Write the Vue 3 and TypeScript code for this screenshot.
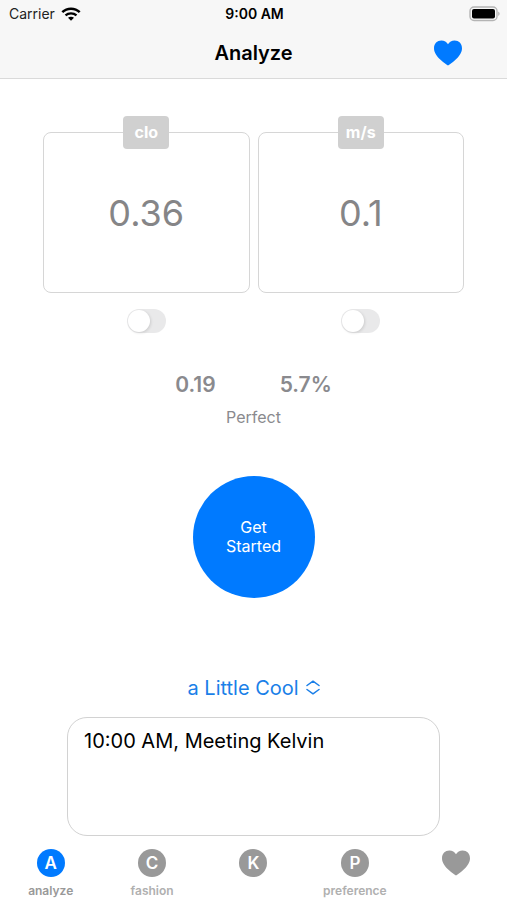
<script setup lang="ts">
import { ref } from 'vue'

interface Reading {
  unit: string
  value: string
  enabled: boolean
}

interface Tab {
  id: string
  letter?: string
  label?: string
  name: string
}

const readings = ref<Reading[]>([
  { unit: 'clo', value: '0.36', enabled: false },
  { unit: 'm/s', value: '0.1', enabled: false },
])

const tabs: Tab[] = [
  { id: 'analyze', letter: 'A', label: 'analyze', name: 'Analyze' },
  { id: 'fashion', letter: 'C', label: 'fashion', name: 'Fashion' },
  { id: 'k', letter: 'K', name: 'K' },
  { id: 'preference', letter: 'P', label: 'preference', name: 'Preference' },
  { id: 'favorites', name: 'Favorites' },
]

const activeTab = ref('analyze')
const sensation = ref('a Little Cool')
const note = ref('10:00 AM, Meeting Kelvin')
const heartPath =
  'M14 25.5C12.8 24.8 9.8 22.8 6.8 20C3.1 16.6 0 12.8 0 8.2C0 3.4 3.2 0.4 7.4 0.4C10.3 0.4 12.7 1.8 14 4.2C15.3 1.8 17.7 0.4 20.6 0.4C24.8 0.4 28 3.4 28 8.2C28 12.8 24.9 16.6 21.2 20C18.2 22.8 15.2 24.8 14 25.5Z'
</script>

<template>
  <div class="app">
    <header class="header">
      <div class="status">
        <div class="carrier">
          <span>Carrier</span>
          <svg width="20" height="14" viewBox="0 0 20 14" fill="none" aria-hidden="true">
            <path d="M1.3 5.2C6.1 0.6 13.9 0.6 18.7 5.2" stroke="#000" stroke-width="2.5" />
            <path d="M4.5 8.4C7.5 5.7 12.5 5.7 15.5 8.4" stroke="#000" stroke-width="2.3" />
            <path d="M7 10.7C8.6 9.4 11.4 9.4 13 10.7L10 13.7Z" fill="#000" />
          </svg>
        </div>
        <span class="clock">9:00 AM</span>
        <svg class="battery" width="31" height="16" viewBox="0 0 31 16" aria-hidden="true">
          <rect x="1" y="1" width="27" height="13.5" rx="4" fill="#f7f7f7" stroke="#b4b4b4" stroke-width="1.4" />
          <rect x="3" y="3" width="23" height="9.5" rx="2" fill="#000" />
          <path d="M29.3 5.5C31 6.2 31 9.3 29.3 10Z" fill="#a5a5a5" />
        </svg>
      </div>
      <div class="nav">
        <h1>Analyze</h1>
        <button class="favorite" type="button" aria-label="Favorite">
          <svg width="28" height="26" viewBox="0 0 28 26" aria-hidden="true">
            <path :d="heartPath" fill="currentColor" />
          </svg>
        </button>
      </div>
    </header>

    <main class="content">
      <section class="readings">
        <div v-for="item in readings" :key="item.unit" class="reading">
          <div class="panel">
            <span class="unit">{{ item.unit }}</span>
            <span class="value">{{ item.value }}</span>
          </div>
          <input v-model="item.enabled" class="switch" type="checkbox" role="switch" :aria-label="item.unit" />
        </div>
      </section>

      <section class="result">
        <div class="figures">
          <strong>0.19</strong>
          <strong>5.7%</strong>
        </div>
        <p>Perfect</p>
      </section>

      <button class="start" type="button">Get<br />Started</button>

      <label class="picker">
        <select v-model="sensation" aria-label="Thermal sensation">
          <option>a Little Cool</option>
        </select>
        <svg width="14" height="16" viewBox="0 0 14 16" fill="none" aria-hidden="true">
          <path d="M1 5.5L7 1.2L13 5.5M1 9.5L7 13.8L13 9.5" stroke="currentColor" stroke-width="1.5" stroke-linecap="round" stroke-linejoin="round" />
        </svg>
      </label>

      <textarea v-model="note" class="note" aria-label="Note" spellcheck="false"></textarea>
    </main>

    <nav class="tabs">
      <button
        v-for="tab in tabs"
        :key="tab.id"
        type="button"
        class="tab"
        :class="{ active: tab.id === activeTab }"
        :aria-label="tab.name"
        @click="activeTab = tab.id"
      >
        <span v-if="tab.letter" class="disc">{{ tab.letter }}</span>
        <svg v-else class="heart" width="28" height="26" viewBox="0 0 28 26" aria-hidden="true">
          <path :d="heartPath" fill="currentColor" />
        </svg>
        <span v-if="tab.label" class="caption">{{ tab.label }}</span>
      </button>
    </nav>
  </div>
</template>

<style>
body {
  margin: 0;
  background: #fff;
}
</style>

<style scoped>
.app {
  display: flex;
  flex-direction: column;
  min-height: 100vh;
  color: #000;
  font-family: Inter, "Liberation Sans", sans-serif;
}

button,
select,
textarea {
  margin: 0;
  padding: 0;
  border: 0;
  background: none;
  color: inherit;
  font-family: inherit;
}

.header {
  border-bottom: 1px solid #dadada;
  background: #f7f7f7;
}

.status {
  display: grid;
  grid-template-columns: 1fr auto 1fr;
  align-items: center;
  height: 27px;
  padding: 0 7px 0 9px;
  font-size: 14px;
}

.carrier {
  display: flex;
  align-items: center;
  gap: 6px;
  color: #222;
}

.clock {
  font-weight: 600;
}

.battery {
  justify-self: end;
}

.nav {
  display: grid;
  grid-template-columns: 1fr auto 1fr;
  align-items: center;
  height: 51px;
  padding: 0 45px;
}

h1 {
  grid-column: 2;
  margin: 0;
  font-size: 20px;
  line-height: 24px;
  font-weight: 600;
}

.favorite {
  display: flex;
  justify-self: end;
  color: #007aff;
}

.content {
  display: flex;
  flex: 1;
  flex-direction: column;
  align-items: center;
  padding: 53px 43px 0;
}

.readings {
  display: grid;
  grid-template-columns: 1fr 1fr;
  gap: 8px;
  width: 100%;
}

.reading {
  display: flex;
  flex-direction: column;
  align-items: center;
  gap: 16px;
}

.panel {
  position: relative;
  display: flex;
  align-items: center;
  justify-content: center;
  box-sizing: border-box;
  width: 100%;
  height: 161px;
  border: 1px solid #d6d6d6;
  border-radius: 8px;
}

.unit {
  position: absolute;
  top: -17px;
  width: 46px;
  border-radius: 4px;
  background: #d0d0d0;
  color: #fff;
  font-size: 16px;
  line-height: 33px;
  font-weight: 700;
  text-align: center;
}

.value {
  color: #858587;
  font-size: 36px;
  line-height: 44px;
}

.switch {
  display: flex;
  appearance: none;
  box-sizing: border-box;
  width: 39px;
  height: 24px;
  margin: 0;
  padding: 1px;
  border-radius: 12px;
  background: #e9e9ea;
}

.switch::before {
  width: 22px;
  height: 22px;
  border-radius: 50%;
  background: #fff;
  box-shadow: 1px 1px 3px rgba(0, 0, 0, 0.12);
  content: "";
}

.switch:checked {
  justify-content: flex-end;
  background: #34c759;
}

.result {
  display: flex;
  flex-direction: column;
  align-items: center;
  gap: 10px;
  margin-top: 40px;
  color: #8a8a8e;
}

.figures {
  display: flex;
  gap: 64px;
  font-size: 21px;
  line-height: 24px;
}

.figures strong {
  font-weight: 600;
}

.result p {
  margin: 0;
  font-size: 16px;
  line-height: 20px;
}

.start {
  width: 122px;
  height: 122px;
  margin-top: 49px;
  border-radius: 50%;
  background: #007aff;
  color: #fff;
  font-size: 16px;
  line-height: 19px;
}

.picker {
  display: flex;
  align-items: center;
  gap: 6px;
  margin-top: 78px;
  color: #1a7fe8;
}

.picker select {
  appearance: none;
  font-size: 20px;
  line-height: 24px;
}

.note {
  display: block;
  box-sizing: border-box;
  width: calc(100% - 48px);
  height: 119px;
  margin-top: 17px;
  padding: 11px 16px;
  border: 1px solid #d2d2d2;
  border-radius: 20px;
  font-size: 20px;
  line-height: 24px;
  resize: none;
}

.tabs {
  display: grid;
  grid-template-columns: repeat(5, 1fr);
  padding: 13px 0 2px;
}

.tab {
  display: flex;
  flex-direction: column;
  align-items: center;
  gap: 6px;
  height: 49px;
  color: #999;
}

.disc {
  width: 28px;
  border-radius: 50%;
  background: #999;
  color: #fff;
  font-size: 17px;
  line-height: 28px;
  font-weight: 600;
}

.active .disc {
  background: #007aff;
}

.heart {
  margin-top: 1px;
}

.caption {
  color: #b0b0b0;
  font-size: 12px;
  line-height: 16px;
  font-weight: 600;
}

.active .caption {
  color: #999;
}
</style>
